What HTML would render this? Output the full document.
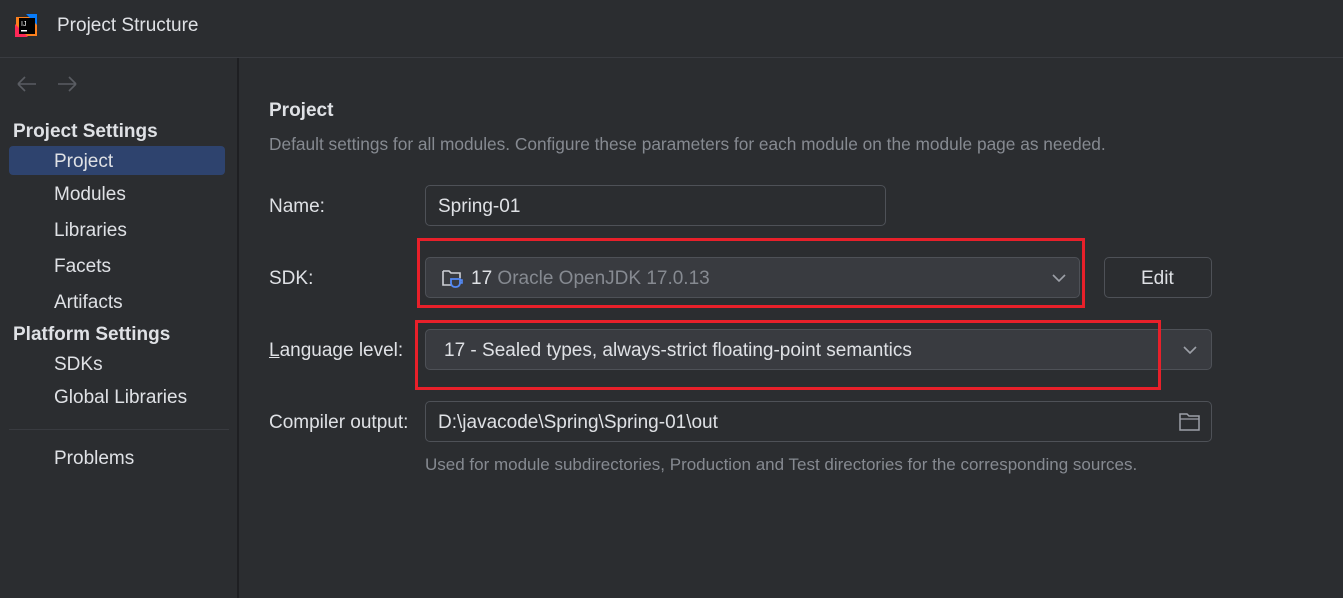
<!DOCTYPE html>
<html><head><style>
*{margin:0;padding:0;box-sizing:border-box}
body{width:1343px;height:598px;background:#2b2d30;font-family:"Liberation Sans",sans-serif;color:#dfe1e5;position:relative;overflow:hidden;font-size:19px}
.a{position:absolute;white-space:nowrap}
.f{position:absolute;border:1px solid #4e5157;border-radius:5px}
.red{position:absolute;border:3px solid #e8202a}
</style></head><body>
<svg class="a" style="left:14px;top:13px" width="26" height="26" viewBox="0 0 26 26">
<path d="M2 4h15l6 6v13H6l-4-4z" fill="#fc801d"/><path d="M12 1h11v11z" fill="#087cfa"/><path d="M1 11v13h13z" fill="#fe2857"/>
<rect x="5" y="5" width="16" height="16" fill="#000"/><text x="7" y="13" font-size="7" fill="#fff" font-family="Liberation Sans">IJ</text><rect x="7" y="17" width="6" height="1.5" fill="#fff"/></svg>
<div class="a" style="left:57px;top:15px;font-size:19px">Project Structure</div>
<div class="a" style="left:0;top:57px;width:1343px;height:1px;background:#393b40"></div>
<div class="a" style="left:237px;top:58px;width:2px;height:540px;background:#1e1f22"></div>
<svg class="a" style="left:16px;top:75px" width="64" height="18"><path d="M2 9h18M2 9l7-7M2 9l7 7M42 9h18M60 9l-7-7M60 9l-7 7" fill="none" stroke="#5a5d63" stroke-width="1.6"/></svg>
<div class="a" style="left:13px;top:121px;font-weight:bold">Project Settings</div>
<div class="a" style="left:9px;top:146px;width:216px;height:29px;background:#2e436e;border-radius:4px"></div>
<div class="a" style="left:54px;top:151px">Project</div>
<div class="a" style="left:54px;top:184px">Modules</div>
<div class="a" style="left:54px;top:220px">Libraries</div>
<div class="a" style="left:54px;top:256px">Facets</div>
<div class="a" style="left:54px;top:292px">Artifacts</div>
<div class="a" style="left:13px;top:324px;font-weight:bold">Platform Settings</div>
<div class="a" style="left:54px;top:354px">SDKs</div>
<div class="a" style="left:54px;top:387px">Global Libraries</div>
<div class="a" style="left:9px;top:429px;width:220px;height:1px;background:#393b40"></div>
<div class="a" style="left:54px;top:448px">Problems</div>

<div class="a" style="left:269px;top:100px;font-weight:bold">Project</div>
<div class="a" style="left:269px;top:134px;font-size:17.3px;color:#868a91">Default settings for all modules. Configure these parameters for each module on the module page as needed.</div>
<div class="a" style="left:269px;top:196px">Name:</div>
<div class="f" style="left:425px;top:185px;width:461px;height:41px"></div>
<div class="a" style="left:438px;top:196px">Spring-01</div>
<div class="a" style="left:269px;top:268px">SDK:</div>
<div class="f" style="left:425px;top:257px;width:655px;height:41px;background:#393b40"></div>
<svg class="a" style="left:441px;top:267px" width="26" height="24" viewBox="0 0 26 24"><path d="M2 4h6l2 2h9v5M2 4v14h8" fill="none" stroke="#ced0d6" stroke-width="1.6"/><path d="M10 12h9v4a4 4 0 0 1-4 4h-1a4 4 0 0 1-4-4z" fill="none" stroke="#548af7" stroke-width="1.8"/><path d="M19 13h2v3h-2" fill="none" stroke="#548af7" stroke-width="1.6"/></svg>
<div class="a" style="left:471px;top:268px">17 <span style="color:#868a91">Oracle OpenJDK 17.0.13</span></div>
<svg class="a" style="left:1052px;top:274px" width="14" height="9"><path d="M1 1l6 6 6-6" fill="none" stroke="#9da0a8" stroke-width="1.6"/></svg>
<div class="f" style="left:1104px;top:257px;width:108px;height:41px"></div>
<div class="a" style="left:1141px;top:268px">Edit</div>
<div class="a" style="left:269px;top:340px"><u>L</u>anguage level:</div>
<div class="f" style="left:425px;top:329px;width:787px;height:41px;background:#393b40"></div>
<div class="a" style="left:444px;top:340px">17 - Sealed types, always-strict floating-point semantics</div>
<svg class="a" style="left:1183px;top:346px" width="14" height="9"><path d="M1 1l6 6 6-6" fill="none" stroke="#9da0a8" stroke-width="1.6"/></svg>
<div class="a" style="left:269px;top:412px">Compiler output:</div>
<div class="f" style="left:425px;top:401px;width:787px;height:41px"></div>
<div class="a" style="left:438px;top:412px">D:\javacode\Spring\Spring-01\out</div>
<svg class="a" style="left:1179px;top:412px" width="22" height="20"><path d="M1 2h7l2 2h10v14H1z" fill="none" stroke="#9da0a8" stroke-width="1.5"/><path d="M1 7h19" stroke="#9da0a8" stroke-width="1.3"/></svg>
<div class="a" style="left:425px;top:455px;font-size:17px;color:#868a91">Used for module subdirectories, Production and Test directories for the corresponding sources.</div>
<div class="red" style="left:417px;top:238px;width:668px;height:70px"></div>
<div class="red" style="left:415px;top:320px;width:746px;height:70px"></div>
</body></html>
